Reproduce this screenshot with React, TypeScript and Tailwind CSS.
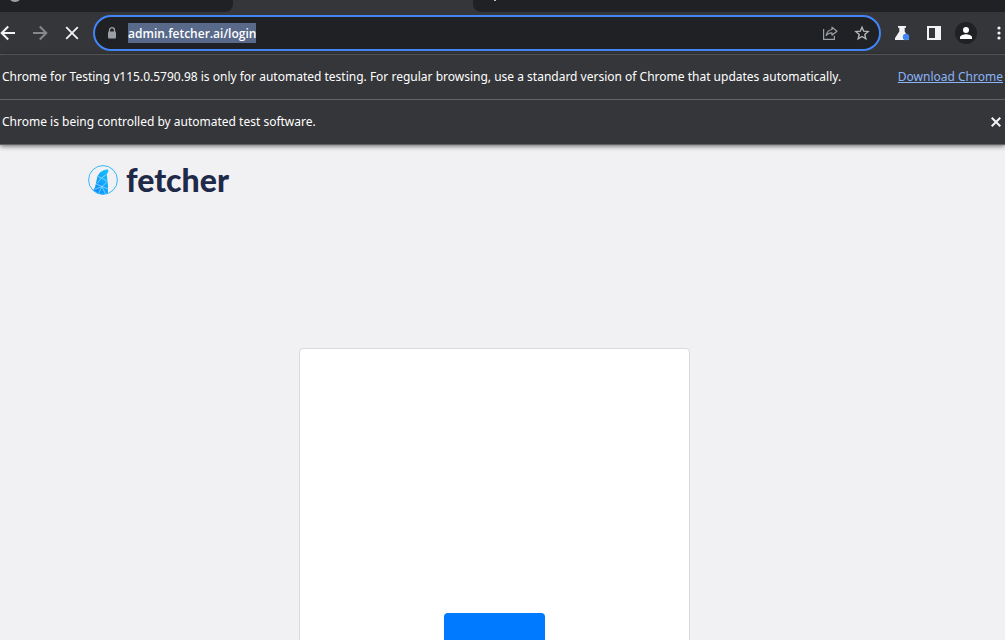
import { useState } from 'react';

function BackIcon() {
  return (
    <svg width="16" height="16" viewBox="0 0 16 16" fill="none" stroke="currentColor" strokeWidth="2" aria-hidden="true">
      <path d="M15 8H2M8.2 1.5 1.7 8l6.5 6.5" />
    </svg>
  );
}

function ForwardIcon() {
  return (
    <svg width="16" height="16" viewBox="0 0 16 16" fill="none" stroke="currentColor" strokeWidth="2" aria-hidden="true">
      <path d="M1 8h13M7.8 1.5 14.3 8l-6.5 6.5" />
    </svg>
  );
}

function StopIcon() {
  return (
    <svg width="16" height="16" viewBox="0 0 16 16" fill="none" stroke="currentColor" strokeWidth="1.8" aria-hidden="true">
      <path d="m2.2 2.2 11.6 11.6M13.8 2.2 2.2 13.8" />
    </svg>
  );
}

function LockIcon() {
  return (
    <svg width="10" height="12" viewBox="0 0 10 12" aria-hidden="true">
      <path d="M2.5 5V3.2a2.5 2.5 0 0 1 5 0V5" fill="none" stroke="#9aa0a6" strokeWidth="1.3" />
      <rect x="1" y="4.4" width="8" height="7" rx="1" fill="#9aa0a6" />
    </svg>
  );
}

function ShareIcon() {
  return (
    <svg width="16" height="16" viewBox="0 0 16 16" fill="none" stroke="#9aa0a6" strokeWidth="1.2" aria-hidden="true">
      <path d="M1.6 4v10.4h10.8V11" />
      <path d="M10 2.2 15 6.2l-5 4V7.9C7.400 7.900 5.600 8.700 4.200 10.500 4.700 7.300 6.600 5 10 4.500z" strokeLinejoin="round" />
    </svg>
  );
}

function StarIcon() {
  return (
    <svg width="16" height="16" viewBox="0 0 16 16" fill="none" stroke="#b3b6ba" strokeWidth="1.4" aria-hidden="true">
      <path d="m8 2.200 1.700 4 4.400.4-3.300 2.900 1 4.300L8 11.500l-3.800 2.300 1-4.300L1.900 6.600l4.400-.4z" />
    </svg>
  );
}

function LabsIcon() {
  return (
    <svg width="16" height="16" viewBox="0 0 16 16" aria-hidden="true">
      <path d="M4 1h8v1.800h-1.300v3.600L14.500 13v2H1v-2l4.300-6.600V2.800H4z" fill="#f1f3f4" />
      <circle cx="12" cy="12" r="3.200" fill="#4285f4" />
    </svg>
  );
}

function SidePanelIcon() {
  return (
    <svg width="16" height="16" viewBox="0 0 16 16" aria-hidden="true">
      <path d="M1 1h14v14H1zM3 3v10h6V3z" fill="#f1f3f4" fillRule="evenodd" />
    </svg>
  );
}

function ProfileIcon() {
  return (
    <svg width="22" height="22" viewBox="0 0 22 22" aria-hidden="true">
      <circle cx="11" cy="11" r="11" fill="#202124" />
      <circle cx="11" cy="8" r="3" fill="#fff" />
      <path d="M5 17v-1.700c0-2.200 4-3.100 6-3.100s6 .9 6 3.100V17z" fill="#fff" />
    </svg>
  );
}

function MenuIcon() {
  return (
    <svg width="4" height="16" viewBox="0 0 4 16" fill="#f1f3f4" aria-hidden="true">
      <circle cx="2" cy="3" r="1.600" />
      <circle cx="2" cy="8" r="1.600" />
      <circle cx="2" cy="13" r="1.600" />
    </svg>
  );
}

function FetcherMark() {
  return (
    <svg width="30" height="30" viewBox="0 0 30 30" aria-hidden="true">
      <defs>
        <linearGradient id="mark" x1="0" y1="1" x2="1" y2="0">
          <stop offset="0" stopColor="#0a84ff" />
          <stop offset="1" stopColor="#18c4fa" />
        </linearGradient>
      </defs>
      <path
        d="M19.500 4.200 20.600 6 18.900 9.300 19.300 14 20 20.500 20 28.300 15 29.500 10 28.500 5 25.200 7 22.500 8.200 17 9.500 11 12 7.500 15.500 5.300z"
        fill="url(#mark)"
      />
      <path
        d="M9.800 11.500 13.500 13 18.500 9.500M13.500 13 9 18.500M13.500 13l6 3.500M14 21.500 6.500 24.500M14 21.500l-3.500 7M14 21.500l3.500 7.500M14 21.500l6 2.500M14 21.500l4.500-4M8 19l6 2.500"
        fill="none"
        stroke="#bfe8ff"
        strokeWidth=".6"
      />
      <circle cx="15" cy="15" r="14.400" fill="none" stroke="#2fb8fb" strokeWidth="1" />
    </svg>
  );
}

function TabStrip() {
  return (
    <div className="flex h-3 bg-[#35363a]">
      <div className="w-[233px] overflow-hidden rounded-br-lg bg-[#202124] pl-2">
        <div className="-mt-3 size-3.5 rounded-full bg-[#9aa0a6]" />
      </div>
      <div className="w-60" />
      <div className="flex-1 rounded-bl-lg bg-[#202124] pl-[21px]">
        <div className="h-px w-0.5 bg-[#bdc1c6]" />
      </div>
    </div>
  );
}

function Toolbar() {
  const [url, setUrl] = useState('admin.fetcher.ai/login');
  return (
    <div className="flex h-[43px] items-center border-b border-[#5f6368] bg-[#35363a]">
      <div className="flex w-[93px] shrink-0 gap-4 text-[#f1f3f4]">
        <button type="button" aria-label="Back"><BackIcon /></button>
        <button type="button" aria-label="Forward" className="text-[#85878a]"><ForwardIcon /></button>
        <button type="button" aria-label="Stop loading"><StopIcon /></button>
      </div>
      <div className="flex h-9 min-w-0 flex-1 items-center rounded-full border-2 border-[#4285f4] bg-[#202124] pr-[9px] pl-3">
        <LockIcon />
        <div className="flex min-w-0 flex-1 pl-[11px]">
          <input
            type="text"
            aria-label="Address"
            value={url}
            onChange={(e) => setUrl(e.target.value)}
            className="field-sizing-content h-5 bg-[#58698a] text-xs font-semibold text-white outline-none"
          />
        </div>
        <div className="flex gap-4">
          <button type="button" aria-label="Share"><ShareIcon /></button>
          <button type="button" aria-label="Bookmark"><StarIcon /></button>
        </div>
      </div>
      <div className="flex w-[124px] shrink-0 items-center pl-[13px]">
        <button type="button" aria-label="Labs"><LabsIcon /></button>
        <button type="button" aria-label="Side panel" className="ml-4"><SidePanelIcon /></button>
        <button type="button" aria-label="Profile" className="ml-[13px]"><ProfileIcon /></button>
        <button type="button" aria-label="Menu" className="ml-5"><MenuIcon /></button>
      </div>
    </div>
  );
}

function InfoBars() {
  return (
    <div className="relative bg-[#35363a] font-['Noto_Sans','Open_Sans',sans-serif] text-xs text-white shadow-[0_1px_5px_rgba(0,0,0,0.6)]">
      <div className="flex h-[45px] items-center justify-between border-b border-[#5f6368] px-0.5 whitespace-nowrap">
        <p>
          Chrome for Testing v115.0.5790.98 is only for automated testing. For regular browsing, use a standard version of Chrome that updates automatically.
        </p>
        <a href="#download" className="text-[#8ab4f8] underline">Download Chrome</a>
      </div>
      <div className="flex h-[45px] items-center justify-between border-b border-[#5f6368] pr-1 pl-0.5">
        <p>Chrome is being controlled by automated test software.</p>
        <button type="button" aria-label="Close">
          <svg width="10" height="10" viewBox="0 0 10 10" stroke="#f1f3f4" strokeWidth="2" aria-hidden="true">
            <path d="m.7.7 8.600 8.600M9.300.7.7 9.300" />
          </svg>
        </button>
      </div>
    </div>
  );
}

export default function App() {
  return (
    <div className="flex h-screen flex-col overflow-hidden bg-[#f1f1f4] font-['Open_Sans','Noto_Sans',sans-serif]">
      <header className="shrink-0">
        <TabStrip />
        <Toolbar />
        <InfoBars />
      </header>
      <main className="min-h-0 flex-1 overflow-hidden pr-4">
        <a href="#home" className="ml-[88px] flex h-[70px] w-fit items-center gap-2">
          <FetcherMark />
          <span className="font-['Lato',sans-serif] text-[32px] leading-8 font-black text-[#1f2a48]">fetcher</span>
        </a>
        <form className="mx-auto mt-[133px] flex w-[391px] flex-col items-center rounded border border-[#d8dadf] bg-white pt-66 pb-10">
          <button type="submit" aria-label="Log in" className="h-10 w-[101px] rounded bg-[#007bff]" />
        </form>
      </main>
    </div>
  );
}
